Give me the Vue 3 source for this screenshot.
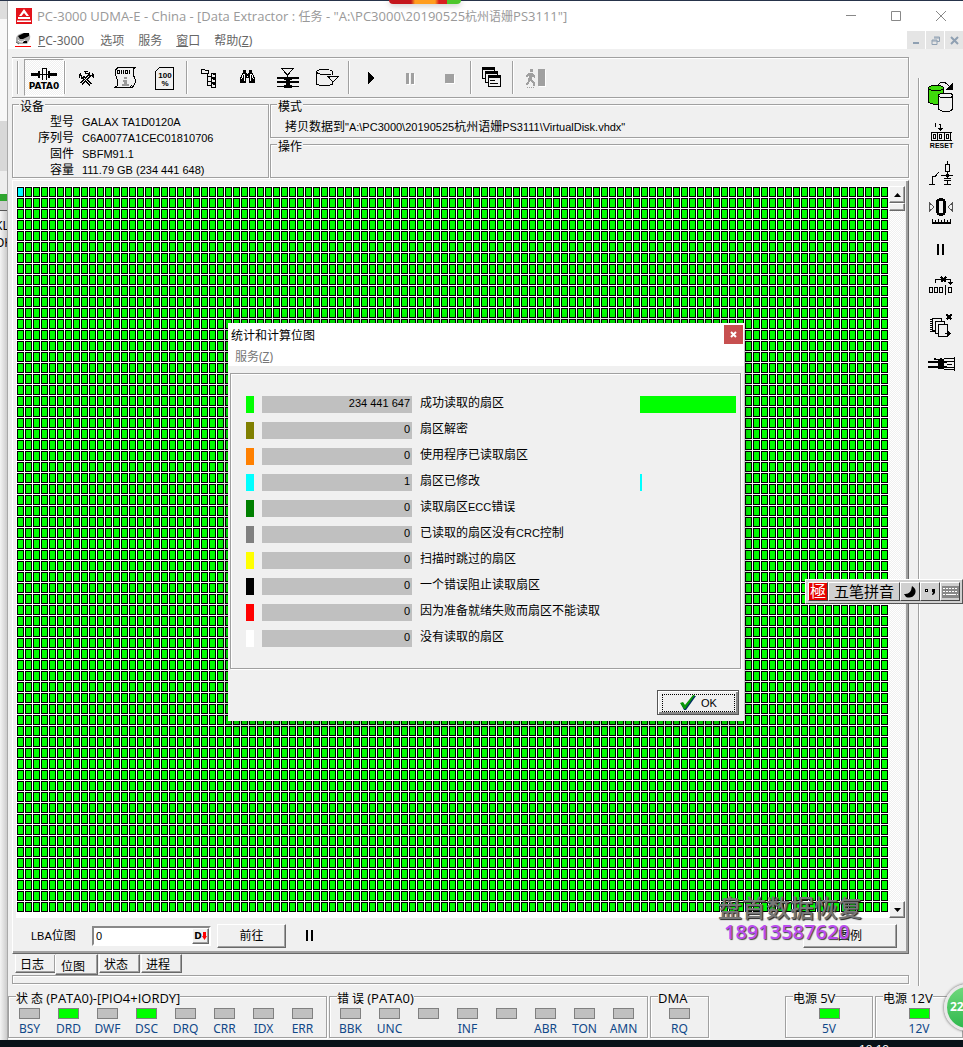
<script setup>
import { ref } from 'vue'

const lba = ref('0')

const device = [
  { label: '型号', value: 'GALAX TA1D0120A' },
  { label: '序列号', value: 'C6A0077A1CEC01810706' },
  { label: '固件', value: 'SBFM91.1' },
  { label: '容量', value: '111.79 GB (234 441 648)' },
]

const stats = [
  { tone: 'lime', count: '234 441 647', label: '成功读取的扇区', share: 100 },
  { tone: 'olive', count: '0', label: '扇区解密', share: 0 },
  { tone: 'orange', count: '0', label: '使用程序已读取扇区', share: 0 },
  { tone: 'cyan', count: '1', label: '扇区已修改', share: 2 },
  { tone: 'green', count: '0', label: '读取扇区', code: 'ECC', tail: '错误', share: 0 },
  { tone: 'gray', count: '0', label: '已读取的扇区没有', code: 'CRC', tail: '控制', share: 0 },
  { tone: 'yellow', count: '0', label: '扫描时跳过的扇区', share: 0 },
  { tone: 'black', count: '0', label: '一个错误阻止读取扇区', share: 0 },
  { tone: 'red', count: '0', label: '因为准备就绪失败而扇区不能读取', share: 0 },
  { tone: 'white', count: '0', label: '没有读取的扇区', share: 0 },
]

const tabs = ['日志', '位图', '状态', '进程']

const indicators = [
  {
    title: '状 态 ',
    detail: '(PATA0)-[PIO4+IORDY]',
    leds: [['BSY', 0], ['DRD', 1], ['DWF', 0], ['DSC', 1], ['DRQ', 0], ['CRR', 0], ['IDX', 0], ['ERR', 0]],
    size: 'wide',
  },
  {
    title: '错 误 ',
    detail: '(PATA0)',
    leds: [['BBK', 0], ['UNC', 0], ['', 0], ['INF', 0], ['', 0], ['ABR', 0], ['TON', 0], ['AMN', 0]],
    size: 'wide',
  },
  { title: '', detail: 'DMA', leds: [['RQ', 0]], size: 'single' },
  { title: '电源 ', detail: '5V', leds: [['5V', 1]], size: 'power first' },
  { title: '电源 ', detail: '12V', leds: [['12V', 1]], size: 'power' },
]
</script>

<template>
  <div class="desktop">
    <div class="topline"></div>
    <div class="workspace">
      <div class="behind">
        <div class="behind-head"></div>
        <div class="behind-bar"></div>
        <div class="behind-text">KL<br>OK</div>
      </div>

      <div class="window">
        <header class="titlebar">
          <svg class="logo" width="16" height="16" viewBox="0 0 16 16">
            <rect width="16" height="16" fill="#e3131b" />
            <path d="M8 1L13 8H10.500L8 5L5.500 8H3Z M2 9H14V11H2Z M1 12.500H15V14H1Z" fill="#fff" />
          </svg>
          <h1>PC-3000 UDMA-E - China - [Data Extractor : <span>任务</span> - "A:\PC3000\20190525<span>杭州语姗</span>PS3111"]</h1>
          <div class="win-buttons">
            <button aria-label="最小化"><svg width="12" height="12"><path d="M1 5.500H11" stroke="#888" fill="none" /></svg></button>
            <button aria-label="最大化"><svg width="12" height="12"><path d="M1.500 1.500H10.500V10.500H1.500Z" stroke="#888" fill="none" /></svg></button>
            <button aria-label="关闭"><svg width="12" height="12"><path d="M1 1L11 11M11 1L1 11" stroke="#888" fill="none" /></svg></button>
          </div>
        </header>

        <nav class="menubar">
          <svg width="16" height="16" viewBox="0 0 16 16">
            <path d="M1 6Q2 2 8 1H14Q16 4 15 7L12 12H4L1 10Z" fill="#aaa" />
            <path d="M3 4L9 1H14V4L8 7H5Z M8 9H12V11H8Z" fill="#000" />
            <path d="M3 8Q6 12 10 8" stroke="#fff" fill="none" />
            <path d="M1 10L4 12" stroke="#555" />
            <rect y="14" width="16" height="1" fill="#f00" />
          </svg>
          <a href="#" class="wide-item"><u>P</u>C-3000</a>
          <a href="#">选项</a>
          <a href="#">服务</a>
          <a href="#"><u>窗</u>口</a>
          <a href="#">帮助(<u>Z</u>)</a>
          <div class="mdi">
            <button aria-label="最小化子窗口"><svg width="9" height="9"><rect x="1" y="6" width="6" height="2" fill="#8fa0b2" /></svg></button>
            <button aria-label="还原子窗口"><svg width="9" height="9"><path d="M3 1H8.500V5.500H6M3 2H8M1 4H6V8.500H1ZM1 5H6" stroke="#8fa0b2" fill="none" /></svg></button>
            <button aria-label="关闭子窗口"><svg width="9" height="9"><path d="M1 1L8 8M8 1L1 8" stroke="#8fa0b2" stroke-width="2" /></svg></button>
          </div>
        </nav>

        <div class="body">
          <main class="main">
            <div class="toolbar groove">
              <span class="sep lead"></span>
              <button class="tool pressed" aria-label="PATA0">
                <svg class="icon" viewBox="0 0 34 34">
                  <path d="M4 12H12V15H4ZM22 12H30V15H22ZM11 10H13V17H11ZM21 10H23V17H21Z" />
                  <path d="M12 13.500H22M15.500 7V19M19.500 7V19M15 7.500H20" class="line" />
                </svg>
                <span class="caption">PATA0</span>
              </button>
              <span class="sep"></span>
              <button class="tool" aria-label="工具">
                <svg class="icon" viewBox="0 0 34 34">
                  <path d="M14 16L22 24M21 14L12 23" stroke="#000" stroke-width="3" fill="none" />
                  <path d="M14 16L22 24M20 15L12 23" stroke="#f0f0f0" fill="none" />
                  <path d="M15 10H19V11H21V13H23V12L25 14V18L22 15H20L18 13H16V11H14ZM11 12H12V14H13V16H15V15H16V17H14V18H12V17H10V13H11Z" />
                  <path d="M17 11.500H20M21 13.500H23M11.500 15V17" stroke="#f0f0f0" fill="none" />
                </svg>
              </button>
              <button class="tool" aria-label="脚本">
                <svg class="icon" viewBox="0 0 34 34">
                  <path d="M9 6.500H26L24 8.500V13L26 18V22L23.500 26.500H6L8.500 24.500V19L6.500 14V9L9 6.500M21 26L23 24" class="line" />
                  <path d="M8.500 9.500H10.500V12.500H8.500ZM12.500 9V13M14.500 9V13M16.500 9.500H18.500V12.500H16.500ZM20.500 9V13" class="line" />
                  <path d="M15 16H18V18H15ZM14 19H18V23H20V25H13V23H15V21H14Z" fill="#999" />
                </svg>
              </button>
              <button class="tool" aria-label="百分比">
                <svg class="icon" viewBox="0 0 34 34">
                  <path d="M10.500 6.500H24.500V28.500H6.500V10.500Z" class="line" />
                  <text x="16" y="17" text-anchor="middle" class="glyph mark">100</text>
                  <text x="16" y="25" text-anchor="middle" class="glyph mark">%</text>
                </svg>
              </button>
              <span class="sep"></span>
              <button class="tool" aria-label="目录树">
                <svg class="icon" viewBox="0 0 34 34">
                  <path d="M10.500 8.500H13.500L14.500 9.500H17.500V12.500H10.500ZM16.500 13V24.500H20M17 15.500H20M17 20.500H20" class="line" />
                  <path d="M20.500 12.500H24.500V16.500H20.500ZM20.500 17.500H24.500V21.500H20.500ZM20.500 22.500H24.500V26.500H20.500Z" class="line" />
                  <path d="M22 13H24V14H22ZM22 18H24V19H22ZM22 23H24V24H22Z" />
                </svg>
              </button>
              <button class="tool" aria-label="搜索">
                <svg class="icon" viewBox="0 0 34 34">
                  <path d="M12 9H15V11L16 13H17L18 11V9H21V11L24 17V22H18V17H15V22H9V17L12 11Z" />
                  <path d="M12.500 13L10.500 18M20.500 13L22.500 18M13.500 13V20M19.500 13V20M16 15H17" stroke="#fff" fill="none" />
                </svg>
              </button>
              <button class="tool" aria-label="磁头">
                <svg class="icon" viewBox="0 0 34 34">
                  <path d="M10.500 7.500H22.500L16.500 14ZM16.500 13V17" class="line" />
                  <path d="M6 16H28V18H6ZM6 20H28V22H6ZM6 25H28V26H6ZM13 17H21V19H19V24H21V27H13V24H15V19H13Z" />
                </svg>
              </button>
              <button class="tool" aria-label="保存">
                <svg class="icon" viewBox="0 0 34 34">
                  <path d="M5.500 11V23Q9 25 15 25Q20 24 21.500 23V20M5.500 11Q6 8.500 13 8.500Q21 8.500 21.500 11V14M5.500 11Q7 13.500 13.500 13.500H20M17 15.500H27.500L22 21Z" class="line" />
                </svg>
              </button>
              <span class="sep"></span>
              <button class="tool" aria-label="开始"><svg class="icon" viewBox="0 0 34 34"><path d="M15 11L21 17L15 23Z" /></svg></button>
              <button class="tool" aria-label="暂停" disabled><svg class="icon" viewBox="0 0 34 34"><path d="M14 13H17V24H14ZM19 13H22V24H19Z" fill="#fff" /><path d="M13 12H16V23H13ZM18 12H21V23H18Z" fill="#a0a0a0" /></svg></button>
              <button class="tool" aria-label="停止" disabled><svg class="icon" viewBox="0 0 34 34"><rect x="13" y="14" width="9" height="9" fill="#fff" /><rect x="12" y="13" width="9" height="9" fill="#a0a0a0" /></svg></button>
              <span class="sep"></span>
              <button class="tool" aria-label="窗口">
                <svg class="icon" viewBox="0 0 34 34">
                  <path d="M7.500 6.500H19.500V17.500H7.500Z" class="sheet" /><path d="M7 6H20V9H7Z" />
                  <path d="M10.500 10.500H22.500V21.500H10.500Z" class="sheet" /><path d="M10 10H23V13H10Z" />
                  <path d="M13.500 14.500H25.500V25.500H13.500Z" class="sheet" /><path d="M13 14H26V17H13ZM15 19H20V20H15ZM15 22H23V23H15Z" />
                </svg>
              </button>
              <span class="sep"></span>
              <button class="tool" aria-label="退出" disabled>
                <svg class="icon" viewBox="0 0 34 34">
                  <path d="M22 9H29V26H22Z" fill="#fff" />
                  <path d="M21 8H28V25H21ZM13 8H16V11H13ZM11 12H16L18 15V17L15 16V19L18 22V25H16V22L13 20L11 24H9V22L11 20L12 14L10 16H9V14Z" fill="#a0a0a0" />
                  <path d="M10 26.500H18" stroke="#a0a0a0" stroke-dasharray="1 1" />
                </svg>
              </button>
            </div>

            <div class="info">
              <section class="group groove">
                <h2>设备</h2>
                <dl>
                  <template v-for="row in device" :key="row.label">
                    <dt>{{ row.label }}</dt>
                    <dd>{{ row.value }}</dd>
                  </template>
                </dl>
              </section>
              <div class="info-right">
                <section class="group groove">
                  <h2>模式</h2>
                  <p>拷贝数据到<span class="latin">"A:\PC3000\20190525</span>杭州语姗<span class="latin">PS3111\VirtualDisk.vhdx"</span></p>
                </section>
                <section class="group groove"><h2>操作</h2></section>
              </div>
            </div>

            <section class="panel">
              <div class="map-row">
                <div class="map"><div class="cells"><div class="current"></div></div></div>
                <div class="scroll">
                  <button aria-label="向上滚动"><svg width="7" height="4"><path d="M0 4L3.500 0L7 4Z" /></svg></button>
                  <div class="thumb"></div>
                  <span class="track"></span>
                  <button aria-label="向下滚动"><svg width="7" height="4"><path d="M0 0L3.500 4L7 0Z" /></svg></button>
                </div>
              </div>
              <div class="controls">
                <label for="lba"><span class="latin">LBA</span>位图</label>
                <div class="spin">
                  <input id="lba" v-model="lba" type="text">
                  <button aria-label="十进制">D<svg width="5" height="8"><path d="M1 0H4V4H5L2.500 8L0 4H1Z" fill="#f00" /></svg></button>
                </div>
                <button class="raised go">前往</button>
                <button class="hold" aria-label="暂停"><svg width="8" height="11"><path d="M0 0H2V11H0ZM5 0H7V11H5Z" /></svg></button>
                <button class="raised legend">图例</button>
              </div>
            </section>

            <div class="tabs" role="tablist">
              <button v-for="(tab, i) in tabs" :key="tab" role="tab" :aria-selected="i === 1" :class="{ active: i === 1 }">{{ tab }}</button>
            </div>
            <div class="progress groove"></div>
          </main>

          <aside class="side">
            <button aria-label="复制磁盘">
              <svg class="icon" viewBox="0 0 34 34">
                <path d="M4.500 8V22Q7 24.500 14 24.500V14H19.500V8" fill="#3fd90b" stroke="#000" />
                <ellipse cx="12" cy="8" rx="7.500" ry="2.500" fill="#3fd90b" stroke="#000" />
                <path d="M14.500 15V29Q17 31.500 22 31.500Q27 31.500 28.500 29V15" fill="#f0f0f0" stroke="#000" />
                <ellipse cx="21.500" cy="15.500" rx="7" ry="2.500" fill="#f0f0f0" stroke="#000" />
                <path d="M14 4.500L17 2.500H21L25 6" class="line" />
                <path d="M29 2V10H21L25 6Z" />
              </svg>
            </button>
            <button aria-label="复位">
              <svg class="icon" viewBox="0 0 34 34">
                <path d="M10 6H11V5H12V9H11V6ZM15 6H17V10H19L16.500 13L14 10H16V7H15Z" />
                <path d="M7.500 14.500H28M7.500 22.500H28M7.500 14V23M13.500 14V23M20.500 14V23M26.500 14V23M9.500 16.500H11.500V20.500H9.500ZM15.500 16.500H17.500V20.500H15.500ZM22.500 16.500H24.500V20.500H22.500Z" class="line" />
                <text x="17.500" y="30" text-anchor="middle" class="glyph reset">RESET</text>
              </svg>
            </button>
            <button aria-label="电源开关">
              <svg class="icon" viewBox="0 0 34 34">
                <path d="M5 28.500H11M8.500 28V20.500H11L15 16M17 19.500H29M23.500 5V8M21.500 8.500H25.500V15.500H21.500ZM23.500 16V22M20 22.500H27M20 24.500H27M23.500 25V28M20 28.500H27" class="line" />
                <rect x="22" y="18" width="3" height="3" />
              </svg>
            </button>
            <button aria-label="归零">
              <svg class="icon" viewBox="0 0 34 34">
                <rect x="13.500" y="5.500" width="7" height="15" rx="3" stroke="#000" stroke-width="3" fill="none" />
                <path d="M5.500 9V17L10 13ZM28.500 9V17L24 13Z" stroke="#555" fill="none" />
                <path d="M8 28H27V30H8ZM8 25H9V28H8ZM11 26H12V28H11ZM14 25H15V28H14ZM17 26H18V28H17ZM20 25H21V28H20ZM23 26H24V28H23ZM26 25H27V28H26Z" />
              </svg>
            </button>
            <button aria-label="暂停任务"><svg class="icon" viewBox="0 0 34 34"><path d="M13 12H15V23H13ZM18 12H20V23H18Z" /></svg></button>
            <button aria-label="跳过扇区">
              <svg class="icon" viewBox="0 0 34 34">
                <path d="M5.500 17.500H8.500V22.500H5.500ZM10.500 17.500H13.500V22.500H10.500ZM15.500 17.500H18.500V22.500H15.500ZM21.500 15V25M24.500 17.500H27.500V22.500H24.500ZM11.500 13V9.500H26.500V13" class="line" />
                <path d="M24 12H29L26.500 15Z" />
                <path d="M17 7L22 12M22 7L17 12" stroke="#000" stroke-width="2" />
              </svg>
            </button>
            <button aria-label="清除页面">
              <svg class="icon" viewBox="0 0 34 34">
                <path d="M8.500 10.500H17.500V22.500H8.500Z" class="sheet" />
                <path d="M11.500 13.500H20.500V25.500H11.500Z" class="sheet" />
                <path d="M14.500 16.500H23.500V28.500H14.500Z" class="sheet" />
                <path d="M6 11.500H9M6 13.500H9M6 15.500H9M6 17.500H9M6 19.500H9M6 21.500H9M6 23.500H11" class="line" />
                <path d="M21 25H24V23L27 25.500L24 28V26H21Z" />
                <path d="M22.500 6.500L27.500 11.500M27.500 6.500L22.500 11.500" stroke="#000" stroke-width="2" />
              </svg>
            </button>
            <button aria-label="连接器">
              <svg class="icon" viewBox="0 0 34 34">
                <path d="M4 15H23V17H4ZM4 20H23V22H4ZM14 14H20V23H14ZM10 12H12V14H10ZM16 12H18V14H16Z" />
                <path d="M12 13.500H20M20 12.500H30M23 15.500H30M23 18.500H28M23 21.500H30M20 23.500H30M30.500 11V25" class="line" />
              </svg>
            </button>
          </aside>
        </div>

        <footer class="status">
          <section v-for="g in indicators" :key="g.detail" class="leds groove" :class="g.size">
            <h2>{{ g.title }}<span>{{ g.detail }}</span></h2>
            <div class="led-row">
              <div v-for="(led, i) in g.leds" :key="i" class="led">
                <i :class="{ on: led[1] }"></i>
                <span>{{ led[0] }}</span>
              </div>
            </div>
          </section>
        </footer>
      </div>
    </div>
    <div class="taskbar"><span>18:18</span></div>

    <section class="dialog" role="dialog" aria-labelledby="dlg-title">
      <header>
        <h2 id="dlg-title">统计和计算位图</h2>
        <button aria-label="关闭对话框"><svg width="7" height="7"><path d="M1 1L6 6M6 1L1 6" stroke="#fff" stroke-width="2" /></svg></button>
      </header>
      <nav><a href="#">服务(<u>Z</u>)</a></nav>
      <div class="stats groove">
        <div v-for="s in stats" :key="s.label" class="stat">
          <i class="swatch" :class="s.tone"></i>
          <output>{{ s.count }}</output>
          <span class="name">{{ s.label }}<span v-if="s.code" class="latin">{{ s.code }}</span>{{ s.tail }}</span>
          <div class="meter"><div :class="s.tone" :style="{ width: s.share + '%' }"></div></div>
        </div>
      </div>
      <div class="actions">
        <button class="ok"><span>
          <svg width="18" height="16" viewBox="0 0 18 16"><path d="M2 9L4 8L6 11L14 1H17L7 15H5Z" fill="#003060" /><path d="M1 8L4 7L6 10L14 0H16L6 14H5Z" fill="#089808" /></svg>
          OK
        </span></button>
      </div>
    </section>

    <div class="ime">
      <button class="seal">極</button>
      <button class="mode">五笔拼音</button>
      <button aria-label="半角"><svg width="12" height="12"><path d="M8 0Q13 3 11 8Q8 13 2 11L0 8Q7 9 8 0Z" /></svg></button>
      <button aria-label="标点"><svg width="12" height="8"><path d="M1 1H4V4H1ZM8 1H11V5L9 7H8L9 4H8Z" /><rect x="2" y="2" width="1" height="1" fill="#fff" /></svg></button>
      <button aria-label="软键盘"><svg width="17" height="12"><rect width="17" height="12" fill="#888" /><path d="M1 2.500H16M1 5.500H16M1 8.500H5M12 8.500H16" stroke="#fff" stroke-dasharray="2 1" /><path d="M5 8.500H12" stroke="#fff" /></svg></button>
    </div>

    <div class="watermark"><strong>盘首数据恢复</strong><b>18913587620</b></div>
    <div class="ball">22</div>
    <div class="notch"></div>
  </div>
</template>

<style>
body { background: #f0f0f0; }
</style>

<style scoped>
* { box-sizing: border-box; }
.desktop {
  position: relative;
  display: flex;
  flex-direction: column;
  min-height: 100vh;
  overflow: hidden;
  background: #f0f0f0;
  color: #000;
  font: 12px/16px "Liberation Sans", "Noto Sans CJK SC", sans-serif;
}
button {
  margin: 0;
  padding: 0;
  border: 0;
  background: none;
  color: inherit;
  font: inherit;
  display: flex;
  align-items: center;
  justify-content: center;
}
h1, h2, p, dl, dd { margin: 0; font-size: 12px; font-weight: 400; }
a { color: inherit; text-decoration: none; }
svg { display: block; flex: none; }
.latin { font-size: 11px; }
.groove {
  border: 1px solid #a0a0a0;
  box-shadow: 1px 1px 0 #fff, inset 1px 1px 0 #fff;
}
.topline { height: 1px; background: #26334a; }
.workspace { flex: 1; display: flex; }

.behind {
  width: 8px;
  overflow: hidden;
  border-right: 1px solid #aaa;
  background: linear-gradient(90deg, #f4f4f4, #ccc);
}
.behind-head { height: 193px; background: linear-gradient(#ddd 0 18px, #f8f8f8 18px 120px, #d8d8d8 120px 170px, #eee 170px); }
.behind-bar { height: 17px; border-top: 7px solid #2fa52f; border-bottom: 1px solid #555; background: #ccc; }
.behind-text { margin: 6px 0 0 -5px; font-family: "Noto Sans", sans-serif; line-height: 17px; }

.window { flex: 1; min-width: 0; display: flex; flex-direction: column; }
.titlebar {
  display: flex;
  align-items: center;
  height: 30px;
  padding-left: 8px;
  background: #fff;
  color: #999;
}
.titlebar h1 {
  flex: 1;
  margin-left: 5px;
  white-space: nowrap;
  font-family: "Open Sans", "Noto Sans CJK SC", sans-serif;
  font-size: 13px;
}
.titlebar h1 span { font-size: 12px; }
.win-buttons { display: flex; }
.win-buttons button { width: 45px; height: 28px; }
.menubar {
  display: flex;
  align-items: center;
  height: 18px;
  padding-left: 7px;
  background: #fff;
  color: #666;
  font-family: "Noto Sans", "Noto Sans CJK SC", sans-serif;
}
.menubar a { margin-right: 14px; padding-top: 2px; }
.menubar .wide-item { margin: 0 16px 0 7px; }
.mdi { display: flex; gap: 1px; margin-left: auto; }
.mdi button { width: 18px; height: 18px; background: #e5e5e5; }

.body { flex: 1; display: flex; }
.main { flex: 1; min-width: 0; display: flex; flex-direction: column; padding: 8px 9px 5px 4px; }
.side { width: 45px; margin: 29px 0 3px; border-left: 1px solid #a0a0a0; box-shadow: inset 1px 0 0 #fff; }
.side button { width: 100%; height: 38px; }

.icon { width: 34px; height: 34px; shape-rendering: crispEdges; }
.icon .line { fill: none; stroke: #000; }
.icon .sheet { fill: #f0f0f0; stroke: #000; }
.glyph { font-family: "Liberation Sans", sans-serif; font-weight: 700; }
.mark { font-size: 8px; }
.reset { font-size: 7px; }

.toolbar { display: flex; height: 41px; padding: 1px 0; border-left: 0; }
.toolbar .tool { width: 40px; }
.toolbar .tool.pressed {
  position: relative;
  border: 1px solid;
  border-color: #a0a0a0 #fff #fff #a0a0a0;
  background: repeating-conic-gradient(#fff 0 25%, #f0f0f0 0 50%) 0 0 / 2px 2px;
}
.caption { position: absolute; left: 0; right: 0; bottom: 3px; text-align: center; font: 700 9px/12px "DejaVu Sans", sans-serif; }
.sep { width: 2px; margin: 2px 0; border-left: 1px solid #a0a0a0; border-right: 1px solid #fff; }
.sep.lead { margin-left: 5px; margin-right: 5px; }

.info { display: grid; grid-template-columns: 257px 1fr; gap: 1px; margin-top: 6px; }
.info-right { display: grid; grid-template-rows: 1fr 1fr; gap: 6px; }
.group h2 {
  width: fit-content;
  margin: -5px 0 0 6px;
  padding: 1px 1px 0;
  background: #f0f0f0;
  line-height: 12px;
}
.group dl { display: grid; grid-template-columns: 61px 1fr; column-gap: 8px; padding-top: 1px; margin-bottom: -1px; }
.group dt { text-align: right; }
.group dd { padding-top: 1px; font-size: 11px; line-height: 15px; }
.group p { padding: 6px 0 0 14px; white-space: nowrap; }

.panel {
  flex: 1;
  display: flex;
  flex-direction: column;
  margin-top: 2px;
  padding: 5px 3px 1px 3px;
  border: 1px solid;
  border-color: #fff #696969 #696969 #fff;
  box-shadow: inset -2px -2px 0 #a0a0a0;
}
.map-row { flex: 1; display: flex; }
.map { flex: 1; background: #fff; padding: 1px 0 0 1px; }
.cells {
  width: 872px;
  max-width: 100%;
  height: 726px;
  background:
    linear-gradient(90deg, transparent 7px, #fff 7px) 0 0 / 8px 11px,
    linear-gradient(transparent 10px, #fff 10px) 0 0 / 8px 11px,
    linear-gradient(90deg, #000 1px, transparent 1px 6px, #000 6px) 0 0 / 8px 11px,
    linear-gradient(#000 1px, #0f0 1px 9px, #000 9px) 0 0 / 8px 11px;
  padding: 1px;
}
.current { width: 5px; height: 8px; background: #0ff; }
.scroll { width: 17px; display: flex; flex-direction: column; background: repeating-conic-gradient(#fff 0 25%, #f0f0f0 0 50%) 0 0 / 2px 2px; }
.scroll button, .thumb, .raised, .spin button {
  border: 1px solid;
  border-color: #fff #696969 #696969 #fff;
  background: #f0f0f0;
  box-shadow: inset -1px -1px 0 #a0a0a0;
}
.scroll button { height: 17px; }
.thumb { height: 8px; }
.track { flex: 1; }
.controls { display: flex; align-items: center; height: 34px; padding: 1px 8px 0 15px; }
.controls label { width: 61px; white-space: nowrap; }
.spin {
  display: flex;
  width: 119px;
  height: 20px;
  border: 2px solid;
  border-color: #888 #fff #fff #888;
  background: #fff;
}
.spin input {
  flex: 1;
  min-width: 0;
  padding: 0 2px;
  border: 0;
  outline: 0;
  background: transparent;
  font: 11px/14px "Liberation Sans", sans-serif;
}
.spin button { width: 17px; font: 700 9px/10px "DejaVu Sans", sans-serif; }
.raised { height: 24px; }
.go { width: 69px; margin-left: 6px; }
.hold { margin-left: 20px; }
.legend { width: 94px; margin-left: auto; }

.tabs { display: flex; height: 21px; padding-left: 3px; align-items: flex-start; }
.tabs button {
  width: 41px;
  height: 19px;
  margin-right: 1px;
  padding: 3px 7px 0 0;
  border: 1px solid;
  border-color: transparent #696969 #696969 #fff;
  box-shadow: inset -1px -1px 0 #a0a0a0;
}
.tabs .active { width: 43px; height: 21px; margin-left: -2px; padding-top: 4px; }
.progress { height: 9px; }

.status { display: flex; gap: 2px; padding: 7px 0 2px; font-family: "Noto Sans", "Noto Sans CJK SC", sans-serif; }
.leds { height: 42px; }
.leds h2 { width: fit-content; margin: -5px 0 0 7px; background: #f0f0f0; line-height: 14px; white-space: pre; }
.leds h2 span { font-family: "Open Sans", sans-serif; font-size: 13px; line-height: 12px; }
.leds.wide { width: 319px; }
.leds.wide .led-row { justify-content: flex-start; padding-left: 1px; }
.leds.single { width: 59px; }
.leds.power { width: 88px; }
.leds.first { margin-left: auto; }
.led-row { display: flex; justify-content: center; padding-top: 2px; }
.led { width: 39px; display: flex; flex-direction: column; align-items: center; color: #104888; line-height: 16px; }
.led i { width: 21px; height: 11px; margin-bottom: 2px; border: 1px solid #808080; background: #c0c0c0; }
.led i.on { background: #0f0; }
.taskbar { height: 7px; overflow: hidden; background: #081218; color: #fff; text-align: right; padding-right: 74px; }
.taskbar span { display: block; padding-top: 2px; }

.dialog {
  position: absolute;
  left: 228px;
  top: 323px;
  width: 516px;
  padding: 0 3px 6px 2px;
  background: #f0f0f0;
  box-shadow: 0 1px 12px rgba(0, 0, 0, .45);
}
.dialog header { display: flex; justify-content: space-between; margin: 0 -3px 0 -2px; padding: 2px 1px 0 3px; background: #fff; }
.dialog h2 { line-height: 19px; font-family: "Noto Sans CJK SC", sans-serif; }
.dialog header button { width: 19px; height: 19px; background: #c75050; }
.dialog nav { height: 22px; margin: 0 -3px 0 -2px; padding: 4px 7px 0; background: #fff; color: #777; line-height: 18px; font-family: "Noto Sans", "Noto Sans CJK SC", sans-serif; }
.stats { display: flex; flex-direction: column; gap: 9px; margin-top: 7px; padding: 22px 4px 21px 15px; }
.stat { display: flex; align-items: flex-start; height: 17px; }
.swatch { width: 8px; height: 17px; }
.stat output { width: 150px; height: 17px; margin: 0 8px; padding-right: 2px; background: #c0c0c0; text-align: right; font-size: 11px; line-height: 15px; }
.name { flex: 1; line-height: 15px; }
.meter { width: 96px; height: 17px; }
.meter div { height: 17px; }
.lime { background: #0f0; }
.olive { background: #808000; }
.orange { background: #ff8000; }
.cyan { background: #0ff; }
.green { background: #008000; }
.gray { background: #808080; }
.yellow { background: #ff0; }
.black { background: #000; }
.red { background: #f00; }
.white { background: #fff; }
.actions { display: flex; justify-content: flex-end; padding: 21px 2px 0; }
.ok { width: 82px; height: 25px; padding: 2px; border: 1px solid #555; box-shadow: inset 1px 1px 0 #fff, inset -2px -2px 0 #888; font-size: 11px; }
.ok span { display: flex; align-items: center; justify-content: center; gap: 4px; width: 73px; height: 18px; border: 1px dotted #000; }

.ime {
  position: absolute;
  right: 0;
  top: 579px;
  display: flex;
  height: 25px;
  padding: 2px;
  border: 1px solid;
  border-color: #fff #555 #555 #fff;
  background: #d0d0d0;
}
.ime button { width: 20px; border: 1px solid; border-color: #fff #444 #444 #fff; }
.ime .seal { width: 20px; background: #e60000; color: #fff; font-size: 16px; }
.ime .mode { width: 72px; font-size: 15px; }

.watermark { position: absolute; left: 718px; top: 892px; display: flex; flex-direction: column; pointer-events: none; }
.watermark strong { color: #777; font: 500 24px/30px "Noto Sans CJK SC", sans-serif; text-shadow: 1px 1px 1px #222; }
.watermark b { margin-left: 6px; color: #bb4cf0; font: 600 20px/20px "Open Sans", sans-serif; text-shadow: 1px 1px 1px #444; }
.ball {
  position: absolute;
  right: -28px;
  bottom: 16px;
  width: 47px;
  height: 47px;
  padding-left: 3px;
  border: 3px solid #e8e8e8;
  border-radius: 50%;
  background: linear-gradient(#6fd87c, #2fb84d);
  box-shadow: 0 0 3px #555;
  color: #fff;
  font: 700 12px/40px "Noto Sans", sans-serif;
}
.notch {
  position: absolute;
  left: 389px;
  top: 0;
  width: 72px;
  height: 4px;
  border-radius: 0 0 4px 4px;
  background: linear-gradient(90deg, #c4161c 0 22px, #ff9d1e 26px 46px, #d81f1f 50px 58px, #4cc62b 58px);
  box-shadow: 0 1px 6px rgba(0, 0, 0, .3);
}
</style>
